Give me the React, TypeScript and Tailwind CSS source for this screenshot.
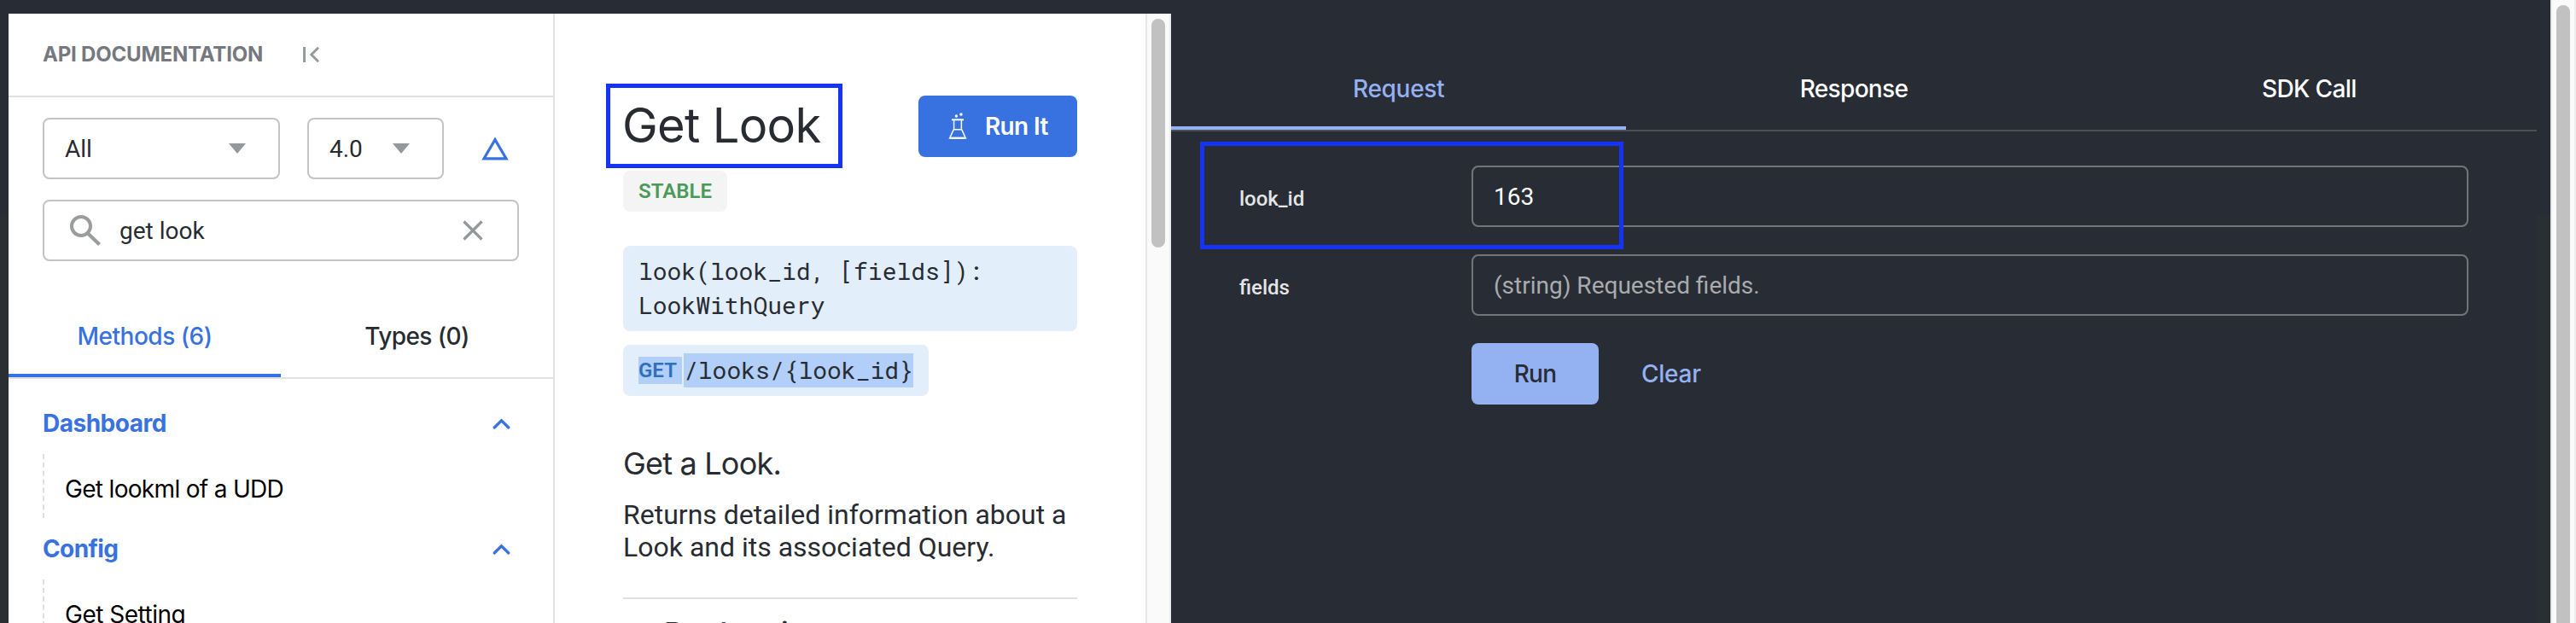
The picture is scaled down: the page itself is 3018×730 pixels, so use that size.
import type { ReactNode } from "react";

function Caret() {
  return (
    <svg width="20" height="12" viewBox="0 0 20 12" className="shrink-0">
      <path d="M0 0H20L10 12Z" fill="#94989b" />
    </svg>
  );
}

function Select({ value, className }: { value: string; className: string }) {
  return (
    <div
      className={`flex h-[72px] items-center justify-between rounded-lg border-2 border-[#c3c4c5] pl-6 pr-[38px] font-['Roboto',sans-serif] text-[28px] ${className}`}
    >
      <span className="pt-0.5">{value}</span>
      <Caret />
    </div>
  );
}

function Group({ title, tracking, children }: { title: string; tracking: string; children: ReactNode }) {
  return (
    <section>
      <div className="flex h-[72px] items-center justify-between pb-px pl-10 pr-[50px] text-[28px] font-[650] text-[#3871e0]">
        <span className={tracking}>{title}</span>
        <svg width="21" height="13" viewBox="0 0 21 13" className="mt-0.5">
          <path d="M2.2 11 10.5 2.8 18.8 11" fill="none" stroke="currentColor" strokeWidth="3.2" strokeLinecap="round" />
        </svg>
      </div>
      <div className="ml-10 flex h-[75px] items-center border-l-2 border-dashed border-[#dedfe0] pl-6 pt-1.5 text-[28px] text-black">
        {children}
      </div>
    </section>
  );
}

function Sidebar() {
  return (
    <aside className="w-[640px] shrink-0 border-r-2 border-[#e0e1e2] bg-white">
      <header className="flex h-[98px] items-center border-b-2 border-[#e0e1e2] pl-10">
        <h2 className="text-[24px] font-bold tracking-[-0.2px] text-[#75797e]">API DOCUMENTATION</h2>
        <svg width="20" height="20" viewBox="0 0 20 20" className="ml-[47px]" fill="none" stroke="#94989b">
          <path d="M1.6 1V19" strokeWidth="3" />
          <path d="M18 1.8 9.8 10 18 18.2" strokeWidth="2.8" />
        </svg>
      </header>

      <div className="px-10 pt-6">
        <div className="flex items-center">
          <Select value="All" className="w-[278px]" />
          <Select value="4.0" className="ml-8 w-40" />
          <svg width="34" height="30" viewBox="0 0 34 30" className="ml-[43px]">
            <path d="M17 4.6 30 26.8H4Z" fill="none" stroke="#3871e0" strokeWidth="3.2" />
          </svg>
        </div>
        <div className="mt-6 flex h-[72px] w-[558px] items-center rounded-lg border-2 border-[#c3c4c5] pl-[30px] pr-10 font-['Roboto',sans-serif] text-[28px]">
          <svg width="36" height="36" viewBox="0 0 36 36" fill="none" stroke="#9a9c9e">
            <circle cx="13" cy="13" r="11" strokeWidth="4" />
            <path d="M21.5 22 34.5 34.5" strokeWidth="4.2" />
          </svg>
          <span className="ml-[22px] grow pt-0.5">get look</span>
          <svg width="24" height="24" viewBox="0 0 24 24" fill="none" stroke="#94989b">
            <path d="M1.5 1.5 22.5 22.5M22.5 1.5 1.5 22.5" strokeWidth="3.2" />
          </svg>
        </div>
      </div>

      <nav className="mt-10 flex h-[98px] border-b-2 border-[#e0e1e2] text-[28px] font-medium">
        <div className="flex w-[319px] items-center justify-center border-b-4 border-[#3871e0] pt-1 tracking-[-0.5px] text-[#3871e0]">
          Methods (6)
        </div>
        <div className="flex w-[319px] items-center justify-center tracking-[-0.6px]">Types (0)</div>
      </nav>

      <div className="pt-4">
        <Group title="Dashboard" tracking="tracking-[-0.5px]">
          <span className="tracking-[-0.68px]">Get lookml of a UDD</span>
        </Group>
        <Group title="Config" tracking="tracking-[-0.6px]">
          <span className="tracking-[-0.5px]">Get Setting</span>
        </Group>
      </div>
    </aside>
  );
}

function FlaskIcon() {
  return (
    <svg width="22" height="32" viewBox="0 0 22 32" fill="none" stroke="#fff" strokeWidth="1.5">
      <path d="M4 8.3H18" strokeWidth="2" />
      <path d="M6.6 8.5V19L1.6 30H20.4L15.4 19V8.5M6.4 19.8H15.6" />
      <path d="M2 29.6H20" strokeWidth="2" />
      <circle cx="9.4" cy="4" r="1.7" fill="#fff" stroke="none" />
      <circle cx="15" cy="2" r="1.8" fill="#fff" stroke="none" />
    </svg>
  );
}

function MethodDoc() {
  return (
    <main className="h-full w-[692px] shrink-0 bg-white px-20 pt-24">
      <div className="flex h-[72px] items-center justify-between">
        <div className="relative pb-[2px]">
          <h1 className="-ml-px text-[56px] leading-[70px] tracking-[-0.7px]">Get Look</h1>
          <div className="absolute -left-5 -top-[14px] z-10 h-[99px] w-[277px] border-5 border-[#1433f5]" />
        </div>
        <button className="flex h-[72px] w-[186px] items-center rounded-lg bg-[#3871e0] pl-[35px] text-[28px] font-semibold text-white">
          <FlaskIcon />
          <span className="ml-[21px] tracking-[-0.65px]">Run It</span>
        </button>
      </div>
      <div className="mt-4 flex h-12 w-[122px] items-center rounded-lg bg-[#f4f4f4] pl-[18px] font-['Roboto',sans-serif] text-[24px] font-semibold text-[#4a9a59]">
        STABLE
      </div>
      <div className="mt-10 h-[100px] rounded-lg bg-[#e3eefb] px-[18px] pb-2 pt-2.5 font-['Roboto_Mono','DejaVu_Sans_Mono',monospace] text-[28px] leading-10">
        look(look_id, [fields]): LookWithQuery
      </div>
      <div className="mt-4 flex h-[60px] w-[358px] items-center rounded-lg bg-[#e3eefb] pl-[18px]">
        <span className="h-8 w-[51px] bg-[#b1cff9] font-['Roboto',sans-serif] text-[24px] font-semibold leading-8 text-[#3070bb]">
          GET
        </span>
        <span className="ml-0.5 h-10 bg-[#b1cff9] font-['Roboto_Mono','DejaVu_Sans_Mono',monospace] text-[28px] leading-10">
          /looks/&#123;look_id&#125;
        </span>
      </div>
      <h2 className="mt-[57px] text-[36px] leading-[44px] tracking-[-0.8px]">Get a Look.</h2>
      <p className="mt-[19px] border-b-2 border-[#dfe0e1] pb-10 font-['Roboto',sans-serif] text-[32px] leading-[38px]">
        Returns detailed information about a Look and its associated Query.
      </p>
      <h3 className="mt-[18px] pl-12 text-[36px] font-medium leading-[44px] tracking-[-0.9px]">Declarations</h3>
    </main>
  );
}

function Field({ label, children }: { label: string; children: ReactNode }) {
  return (
    <div className="flex items-center">
      <label className="w-[272px] pt-[5px] font-['Roboto',sans-serif] text-[24px] font-medium text-[#e4e5e6]">{label}</label>
      <div className="flex h-[72px] w-[1168px] items-center rounded-lg border-2 border-[#70757a] pl-6 pt-0.5 font-['Roboto',sans-serif] text-[28px]">
        {children}
      </div>
    </div>
  );
}

function RunPanel() {
  return (
    <section className="w-[1600px] shrink-0 pt-14 text-white">
      <nav className="grid h-[98px] grid-cols-3 border-b-2 border-[#4c5054] text-[28px] font-medium">
        <div className="flex items-center justify-center border-b-4 border-[#94b1f2] pt-1 tracking-[-0.3px] text-[#94b1f2]">Request</div>
        <div className="flex items-center justify-center tracking-[-0.68px]">Response</div>
        <div className="flex items-center justify-center tracking-[-0.6px]">SDK Call</div>
      </nav>
      <form className="relative pl-20 pt-10">
        <div className="absolute left-[34px] top-3 z-10 h-[126px] w-[496px] border-5 border-[#1433f5]" />
        <Field label="look_id">163</Field>
        <div className="h-8" />
        <Field label="fields">
          <span className="text-[#a9abae]">(string) Requested fields.</span>
        </Field>
        <div className="ml-[272px] mt-8 flex h-[72px] items-center text-[28px] font-medium">
          <div className="flex h-full w-[149px] items-center justify-center rounded-lg bg-[#94b1f2] tracking-[-0.7px] text-[#282c34]">Run</div>
          <div className="ml-[50px] tracking-[-0.25px] text-[#94b1f2]">Clear</div>
        </div>
      </form>
    </section>
  );
}

export default function App() {
  return (
    <div className="flex h-[730px] w-[3018px] overflow-hidden bg-[#282c34] font-['Inter',sans-serif] text-[#282c32]">
      <div className="w-2.5 shrink-0 bg-linear-to-b from-[#282c34] from-[252px] to-[#2a2f31] to-[252px]" />
      <div className="mt-4 flex h-[714px]">
        <Sidebar />
        <MethodDoc />
        <div className="flex w-[30px] shrink-0 justify-center border-x-2 border-l-[#e7e7e7] border-r-[#ededed] bg-[#fafafa] pt-1.5">
          <div className="h-[268px] w-4 rounded-full bg-[#c1c1c1]" />
        </div>
      </div>
      <RunPanel />
      <div className="w-4 shrink-0 bg-linear-to-b from-[#282c34] from-[252px] to-[#2a2f31] to-[252px]" />
      <div className="flex w-[30px] shrink-0 justify-center border-x-2 border-l-[#e7e7e7] border-r-[#ededed] bg-[#fafafa] pt-1.5">
        <div className="h-[1400px] w-4 shrink-0 rounded-full bg-[#c1c1c1]" />
      </div>
    </div>
  );
}
